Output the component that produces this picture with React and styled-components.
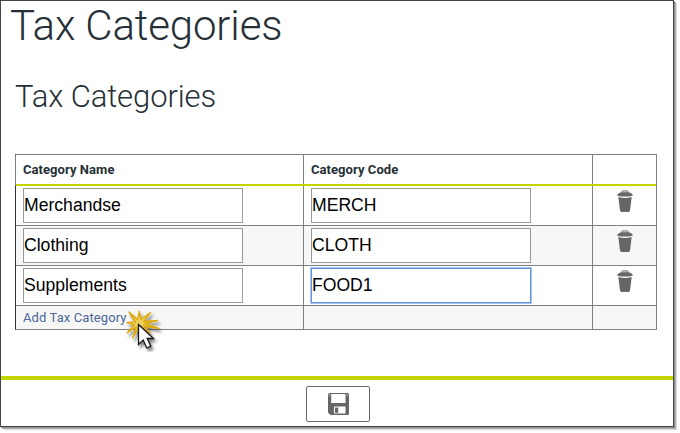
import React, { useState } from "react";
import styled, { createGlobalStyle } from "styled-components";

const GlobalStyle = createGlobalStyle`
  * { box-sizing: border-box; }
  body { margin: 0; background: #fff; font-family: Roboto, sans-serif; color: #262f36; }
  #root { height: 433px; }
`;

const Window = styled.main`
  display: flex;
  flex-direction: column;
  width: 674px;
  height: 427px;
  border: 1px solid #454345;
  background: #fff;
  box-shadow: 1px 1px 0 #8f8f8f, 2px 2px 0 #b0b0b0, 3px 3px 1px #dcdcdc;
`;

const PageTitle = styled.h1`
  margin: 0 0 0 9px;
  height: 70px;
  font-size: 42px;
  font-weight: 300;
  line-height: 50px;
  letter-spacing: -0.15px;
`;

const SectionTitle = styled.h2`
  margin: 0 0 0 14px;
  height: 83px;
  font-size: 31px;
  font-weight: 300;
  line-height: 52px;
  letter-spacing: -0.1px;
`;

const Table = styled.div`
  width: 642px;
  margin-left: 14px;
  border: 1px solid #808080;
  border-left-color: #303030;
`;

const Row = styled.div`
  display: grid;
  grid-template-columns: 287px 289px 64px;
  height: ${(p) => p.$height}px;
  background: ${(p) => (p.$shaded ? "#f7f7f7" : "#fff")};
  border-bottom: ${(p) => (p.$last ? "0" : "1px solid #808080")};
`;

const HeaderRow = styled(Row)`
  margin: 0 -1px;
  border: 0 solid #808080;
  border-width: 0 1px;
  background:
    linear-gradient(#c3d500, #c3d500) left bottom / 100% 2px no-repeat border-box #fff;
`;

const Cell = styled.div`
  padding: 2px 7px 0;
  border-left: ${(p) => (p.$first ? "0" : "1px solid #808080")};
`;

const HeaderCell = styled(Cell)`
  height: 29px;
  padding-top: 0;
  font-size: 13px;
  font-weight: 700;
  line-height: 30px;
  letter-spacing: 0.06px;
`;

const IconCell = styled(Cell)`
  display: flex;
  justify-content: center;
  align-items: flex-start;
  padding: 4px 0 0;
`;

const TextInput = styled.input`
  display: block;
  width: 220px;
  height: 35px;
  padding: 0 0 1px 0;
  border: 1px solid ${(p) => (p.$active ? "#6593dd" : "#999")};
  border-radius: 0;
  outline: 0;
  box-shadow: ${(p) => (p.$active ? "0 0 0 1px #a5c3f3" : "none")};
  background: #fff;
  color: #000;
  font: 17.6px "Liberation Sans", Arial, sans-serif;
`;

const AddLink = styled.a`
  display: block;
  position: relative;
  width: fit-content;
  color: #4b6898;
  font-size: 13px;
  line-height: 19px;
  letter-spacing: 0.1px;
  white-space: nowrap;
`;

const Pointer = styled.svg`
  position: absolute;
  left: 101px;
  top: 0;
  pointer-events: none;
`;

const Footer = styled.footer`
  display: flex;
  justify-content: center;
  margin-top: auto;
  height: 50px;
  padding-top: 6px;
  border-top: 4px solid #c3d500;
`;

const SaveButton = styled.button`
  display: flex;
  align-items: center;
  justify-content: center;
  width: 64px;
  height: 36px;
  margin-left: 2px;
  padding: 0 0 0 1px;
  border: 1px solid #66686b;
  border-radius: 2px;
  background: #fff;
`;

const TrashIcon = () => (
  <svg width="16" height="23" viewBox="0 0 16 23">
    <path d="M4.500 2.800Q4.500.8 6 .8h4q1.500 0 1.500 2" fill="#ccc" stroke="#858585" />
    <path d="M2 3.200Q3 2.300 5 2.300h6q2 0 3 .9l1.700 1.600v.9Q12 6.600 8 6.600T.3 5.700V4.800z" fill="#686868" />
    <path d="M1.300 7Q8 8.800 14.700 7L13 20.600Q12.800 22 11.400 22H4.600Q3.200 22 3 20.600z" fill="#666" />
  </svg>
);

const SaveIcon = () => (
  <svg width="21" height="22" viewBox="0 0 21 22">
    <path d="M2 0H19.500Q21 0 21 1.500v19Q21 22 19.500 22H2.500L0 19.500V2Q0 0 2 0z" fill="#666" />
    <path d="M3.200 1H17.500v9H3.200z" fill="#fff" />
    <path d="M6 13.500h11.500v7H6z" fill="#fff" />
    <path d="M7 14.500h3.200v5.300H7z" fill="#666" />
    <path d="M1 1.500h1.200v1.800H1zM18.500 1.500h1.300v1.800h-1.300z" fill="#bbb" />
  </svg>
);

const ClickPointer = () => (
  <Pointer width="40" height="44" viewBox="124 308 40 44">
    <defs>
      <filter id="soft" x="-40%" y="-40%" width="200%" height="200%">
        <feDropShadow dx="2" dy="3" stdDeviation="1.6" floodColor="#000" floodOpacity=".5" />
      </filter>
    </defs>
    <path
      d="M139.300 311.500L140.800 319.500 150.500 312.500 143.500 321.500 157.500 320.500 145 323.500 159 328.500 143.500 325.800 150 333 139.500 326.500 132.500 338 136.500 327 127 333 134.500 325 127 322.500 135.500 322 129 312 137.500 319.500z"
      fill="#ecd360"
      stroke="#dfaa10"
      strokeWidth="1.400"
      strokeLinejoin="round"
      filter="url(#soft)"
    />
    <path
      d="M138.500 324.500v20l4.700-4.500 3.600 8 4-1.800-3.600-7.700h6.300z"
      fill="#fff" stroke="#17171c" strokeWidth="1.300" strokeLinejoin="miter" filter="url(#soft)"
    />
  </Pointer>
);

const initialRows = [
  { name: "Merchandse", code: "MERCH" },
  { name: "Clothing", code: "CLOTH" },
  { name: "Supplements", code: "FOOD1" },
];

export default function App() {
  const [rows, setRows] = useState(initialRows);
  const update = (index, key) => (e) =>
    setRows(rows.map((r, i) => (i === index ? { ...r, [key]: e.target.value } : r)));

  return (
    <>
      <GlobalStyle />
      <Window>
        <PageTitle>Tax Categories</PageTitle>
        <SectionTitle>Tax Categories</SectionTitle>
        <Table>
          <HeaderRow $height={31}>
            <HeaderCell $first>Category Name</HeaderCell>
            <HeaderCell>Category Code</HeaderCell>
            <HeaderCell />
          </HeaderRow>
          {rows.map((row, i) => (
            <Row key={i} $height={40} $shaded={i % 2 === 1}>
              <Cell $first>
                <TextInput value={row.name} onChange={update(i, "name")} />
              </Cell>
              <Cell>
                <TextInput value={row.code} $active={i === 2} onChange={update(i, "code")} />
              </Cell>
              <IconCell>
                <TrashIcon />
              </IconCell>
            </Row>
          ))}
          <Row $height={23} $shaded $last>
            <Cell $first>
              <AddLink>
                Add Tax Category
                <ClickPointer />
              </AddLink>
            </Cell>
            <Cell />
            <Cell />
          </Row>
        </Table>
        <Footer>
          <SaveButton aria-label="Save">
            <SaveIcon />
          </SaveButton>
        </Footer>
      </Window>
    </>
  );
}
